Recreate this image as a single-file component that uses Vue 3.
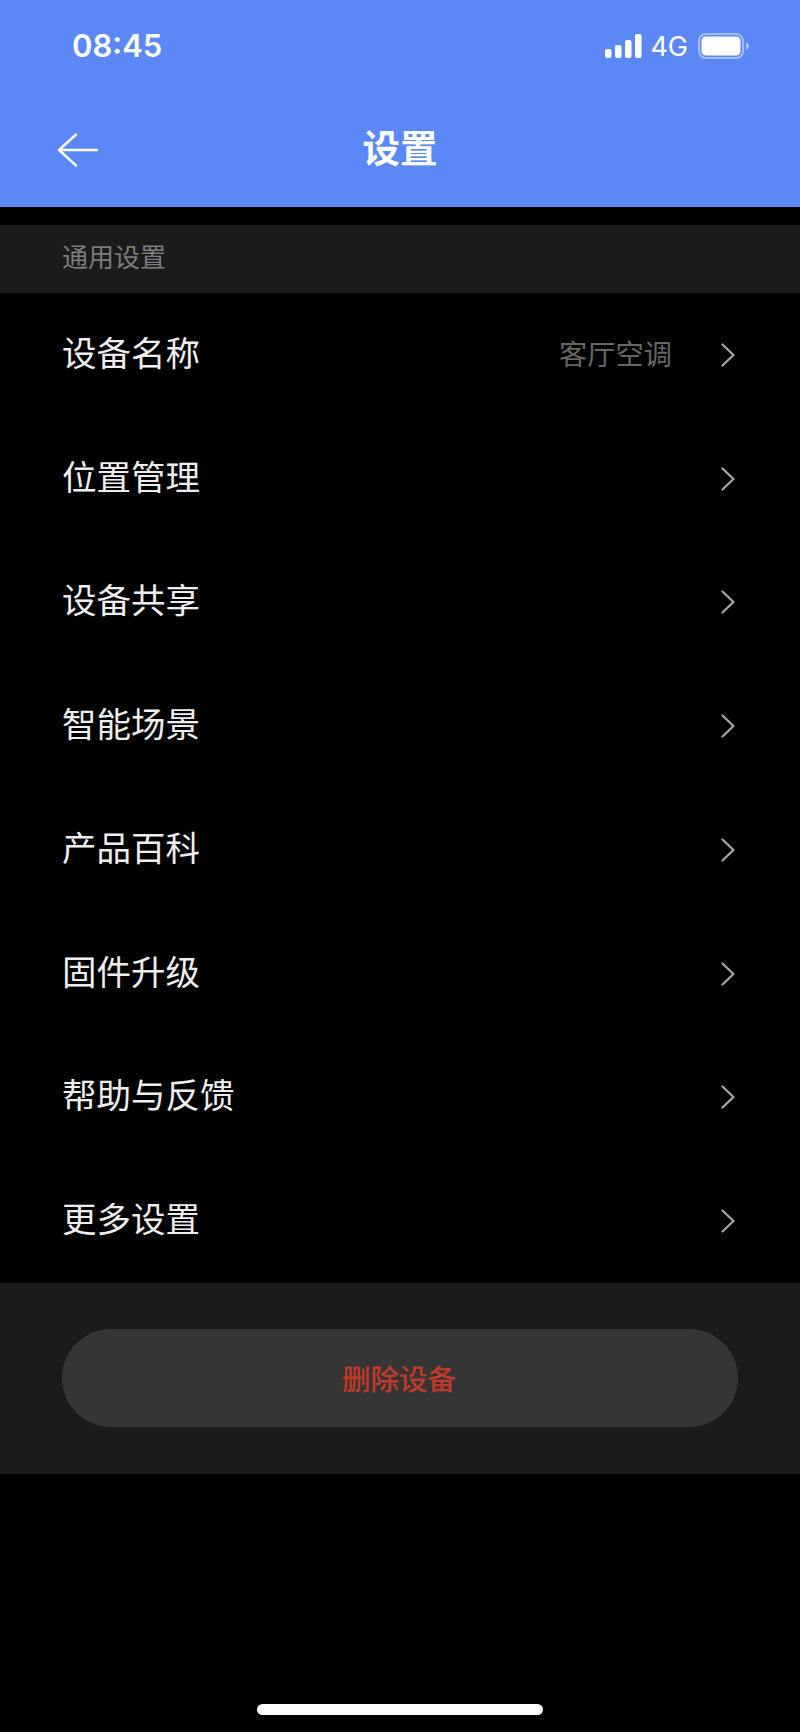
<script setup>
const rows = [
  { label: '设备名称', value: '客厅空调' },
  { label: '位置管理' },
  { label: '设备共享' },
  { label: '智能场景' },
  { label: '产品百科' },
  { label: '固件升级' },
  { label: '帮助与反馈' },
  { label: '更多设置' },
]
</script>

<template>
  <div class="page">
    <header class="header">
      <div class="status">
        <span class="time">08:45</span>
        <div class="status-right">
          <svg class="signal" width="37" height="24" viewBox="0 0 37 24" fill="#fff">
            <rect x="0" y="15" width="6.5" height="9" rx="2" />
            <rect x="10" y="11" width="6.5" height="13" rx="2" />
            <rect x="20" y="6" width="6.5" height="18" rx="2" />
            <rect x="30" y="0" width="6.5" height="24" rx="2" />
          </svg>
          <span class="net">4G</span>
          <svg class="battery" width="52" height="26" viewBox="0 0 52 26">
            <rect x="1" y="1" width="44" height="24" rx="7" fill="none" stroke="#fff" stroke-opacity="0.45" stroke-width="2" />
            <rect x="3.5" y="3.5" width="39" height="19" rx="4.5" fill="#fff" />
            <path d="M48 9.5c2 .6 3 2 3 3.5s-1 2.9-3 3.5z" fill="#fff" fill-opacity="0.5" />
          </svg>
        </div>
      </div>
      <div class="nav">
        <svg class="back" width="42" height="34" viewBox="0 0 42 34" fill="none" stroke="#fff" stroke-width="2.4" stroke-linecap="round" stroke-linejoin="round">
          <path d="M19 1.5 2 17l17 15.5M2 17h38" />
        </svg>
        <h1 class="title">设置</h1>
      </div>
    </header>

    <section class="section-head">通用设置</section>

    <ul class="list">
      <li v-for="row in rows" :key="row.label" class="row">
        <span class="label">{{ row.label }}</span>
        <span v-if="row.value" class="value">{{ row.value }}</span>
        <svg class="chevron" width="14" height="24" viewBox="0 0 14 24" fill="none" stroke="#a8a8a8" stroke-width="2.2" stroke-linecap="round" stroke-linejoin="round">
          <path d="M1.5 1.5 12.5 12 1.5 22.5" />
        </svg>
      </li>
    </ul>

    <div class="footer">
      <button class="delete" type="button">删除设备</button>
    </div>

    <div class="home-wrap"><div class="home"></div></div>
  </div>
</template>

<style>
html, body { margin: 0; background: #000; }
</style>

<style scoped>
.page {
  width: 800px;
  height: 1732px;
  background: #000;
  display: flex;
  flex-direction: column;
  font-family: "Noto Sans CJK SC", "Noto Sans", sans-serif;
  overflow: hidden;
}
.header {
  height: 207px;
  background: #5b88f6;
  color: #fff;
  display: flex;
  flex-direction: column;
}
.status {
  height: 90px;
  padding: 0 50px 0 72px;
  box-sizing: border-box;
  display: flex;
  align-items: center;
  justify-content: space-between;
}
.time {
  font-family: Inter, sans-serif;
  font-weight: 600;
  font-size: 31px;
  line-height: 1;
}
.status-right {
  display: flex;
  align-items: center;
  padding-top: 2px;
}
.signal { margin-right: 8px; }
.net {
  font-family: Inter, sans-serif;
  font-size: 27px;
  line-height: 1;
  margin-right: 10px;
}
.nav {
  flex: 1;
  position: relative;
  display: flex;
  align-items: center;
  justify-content: center;
}
.back {
  position: absolute;
  left: 57px;
  top: 43px;
}
.title {
  margin: 0 0 6px;
  font-size: 37.5px;
  font-weight: 700;
  line-height: 1;
}
.section-head {
  margin-top: 18px;
  height: 68px;
  padding: 0 0 7px 62px;
  box-sizing: border-box;
  background: #1b1b1b;
  color: #7c7c7c;
  font-size: 26px;
  display: flex;
  align-items: center;
}
.list {
  list-style: none;
  margin: 0;
  padding: 0;
}
.row {
  height: 123.75px;
  padding: 0 65px 0 62px;
  display: flex;
  align-items: center;
}
.label {
  flex: 1;
  color: #eeeeee;
  font-size: 34.5px;
  padding-bottom: 8px;
}
.value {
  color: #666;
  font-size: 28.25px;
  margin-right: 49px;
  padding-bottom: 4px;
}
.footer {
  height: 191px;
  background: #1b1b1b;
  padding: 46px 62px 0;
  box-sizing: border-box;
}
.delete {
  display: block;
  width: 100%;
  height: 98px;
  border: 0;
  border-radius: 49px;
  background: #353535;
  color: #c0392b;
  font-family: inherit;
  font-size: 28.5px;
  font-weight: 500;
  padding: 0 2px 2px 0;
}
.home-wrap {
  flex: 1;
  display: flex;
  align-items: flex-end;
  justify-content: center;
  padding-bottom: 17px;
}
.home {
  width: 286px;
  height: 11px;
  border-radius: 5.5px;
  background: #fff;
}
</style>
